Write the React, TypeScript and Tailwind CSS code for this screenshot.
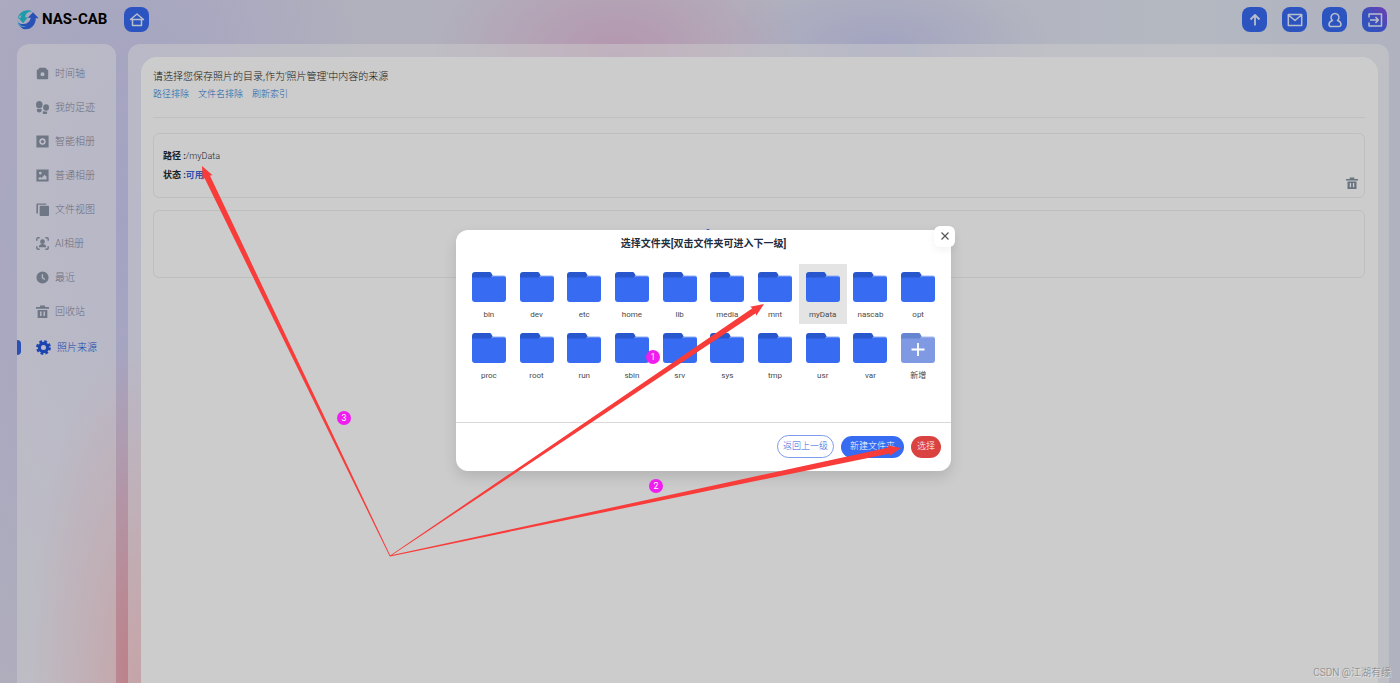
import type { ReactNode } from 'react';

interface MenuItem {
  label: string;
  icon: ReactNode;
  active?: boolean;
}

interface Arrow {
  from: [number, number];
  to: [number, number];
}

const menu: MenuItem[] = [
  {
    label: '时间轴',
    icon: (
      <path
        fillRule="evenodd"
        d="M3 2.500 4.500 1h7L13 2.500l2 1.500v9.500a1.500 1.500 0 0 1-1.500 1.500h-11A1.500 1.500 0 0 1 1 13.500V4zM8 6.500a2.500 2.500 0 1 0 0 5 2.500 2.500 0 0 0 0-5z"
      />
    ),
  },
  {
    label: '我的足迹',
    icon: (
      <>
        <ellipse cx="4" cy="4.500" rx="4" ry="4.500" />
        <path d="M1 9.800h6v1.500a3 3 0 0 1-6 0z" />
        <ellipse cx="12.400" cy="8" rx="3.600" ry="4" />
        <path d="m8.500 12.500 5.500.7-.4 1.400a2.600 2.600 0 0 1-5.200-.8z" />
      </>
    ),
  },
  {
    label: '智能相册',
    icon: (
      <path
        fillRule="evenodd"
        d="M.500.500h15v15H.500zM8 3.800 11 5l1.200 3L11 11l-3 1.200L5 11 3.800 8 5 5zM8 6a2 2 0 1 0 0 4 2 2 0 0 0 0-4z"
      />
    ),
  },
  {
    label: '普通相册',
    icon: (
      <path
        fillRule="evenodd"
        d="M.500.500h15v15H.500zM5.300 3.500a1.700 1.700 0 1 0 0 3.400 1.700 1.700 0 0 0 0-3.400zM3 13h10V9.500L10.500 7l-3.700 4L5 9.500l-2 2z"
      />
    ),
  },
  {
    label: '文件视图',
    icon: (
      <>
        <rect x="4.500" y="3.500" width="11.500" height="12.500" rx="1" />
        <path d="M.500 1.500a1 1 0 0 1 1-1h11V2H2.400v11H.500z" />
      </>
    ),
  },
  {
    label: 'AI相册',
    icon: (
      <>
        <path
          d="M1 4.500V2.500A1.500 1.500 0 0 1 2.500 1h2M11.500 1h2A1.500 1.500 0 0 1 15 2.500v2M15 11.500v2a1.500 1.500 0 0 1-1.500 1.500h-2M4.500 15h-2A1.500 1.500 0 0 1 1 13.500v-2"
          fill="none"
          stroke="currentColor"
          strokeWidth="1.800"
        />
        <circle cx="8" cy="5.800" r="2.900" />
        <path d="M3.500 12.500c0-3 2-4 4.500-4s4.500 1 4.500 4z" />
      </>
    ),
  },
  {
    label: '最近',
    icon: <path fillRule="evenodd" d="M8 .500a7.500 7.500 0 1 0 0 15 7.500 7.500 0 0 0 0-15zM7.100 4h1.600v4l2.700 1.700-.9 1.300-3.400-2.200z" />,
  },
  { label: '回收站', icon: <TrashShape /> },
  {
    label: '照片来源',
    active: true,
    icon: (
      <>
        <circle cx="8" cy="8" r="4.400" fill="none" stroke="currentColor" strokeWidth="3.400" />
        <circle cx="8" cy="8" r="6.600" fill="none" stroke="currentColor" strokeWidth="2.600" strokeDasharray="2.900 2.284" />
      </>
    ),
  },
];

const folders = [
  'bin', 'dev', 'etc', 'home', 'lib', 'media', 'mnt', 'myData', 'nascab', 'opt',
  'proc', 'root', 'run', 'sbin', 'srv', 'sys', 'tmp', 'usr', 'var',
];

const arrows: Arrow[] = [
  { from: [390, 556], to: [764, 304] },
  { from: [390, 556], to: [901, 448] },
  { from: [390, 556], to: [202, 166] },
];

// Thin at the tail, thick towards the head
function arrowPoints({ from, to }: Arrow) {
  const [x1, y1] = from;
  const [x2, y2] = to;
  const length = Math.hypot(x2 - x1, y2 - y1);
  const ux = (x2 - x1) / length;
  const uy = (y2 - y1) / length;
  const at = (back: number, side: number) => `${x2 - ux * back - uy * side},${y2 - uy * back + ux * side}`;
  return [at(length, -0.4), at(12, -3), at(13, -5.5), at(0, 0), at(13, 5.5), at(12, 3), at(length, 0.4)].join(' ');
}

function TrashShape() {
  return (
    <path
      fillRule="evenodd"
      d="M5 .500h6v2h5v2.200H0V2.500h5zM2 6h12v10H2zM5 8v5.500h1.800V8zm4.200 0v5.500H11V8z"
    />
  );
}

function Logo() {
  return (
    <svg viewBox="0 0 66 60" className="h-5 w-[22px]">
      <path d="M2 29C3 13 16 1 32 1c6 0 10 1 14 4-9-1-17 3-20 10l-2 7h9L18 40 4 23h7c0-3 1-6 3-9C7 18 3 23 2 29z" fill="#23c4d2" />
      <path d="M4 38c5 3 10 5 16 4 12-1 20-9 21-19h-9L48 7l17 18h-9c1 18-12 33-29 33C16 58 7 50 4 38z" fill="#3466e4" />
      <path d="M2 30c4 16 14 20 26 17-6 5-15 5-21 1-3-5-5-11-5-18z" fill="#55c2ea" />
    </svg>
  );
}

function HeaderButton({ label, purple, children }: { label: string; purple?: boolean; children: ReactNode }) {
  return (
    <button
      type="button"
      aria-label={label}
      className={`flex size-[25px] items-center justify-center rounded-lg text-[#e8eeff] ${
        purple ? 'bg-linear-to-bl from-[#8a4be0] via-[#4a62ea] to-[#376af0]' : 'bg-[#376af0]'
      }`}
    >
      <svg viewBox="0 0 16 16" fill="none" stroke="currentColor" strokeWidth="1.500" strokeLinejoin="round" className="size-4">
        {children}
      </svg>
    </button>
  );
}

function FolderIcon({ muted }: { muted?: boolean }) {
  return (
    <svg viewBox="0 0 34 30" className="h-[30px] w-[34px]">
      <path d="M0 3a3 3 0 0 1 3-3h14.500a2 2 0 0 1 1.800 1L21 4v8H0z" fill={muted ? '#6685d0' : '#2856cc'} />
      <path d="M20 3.500h12a2 2 0 0 1 2 2V10H18z" fill={muted ? '#a9bcf0' : '#8faef8'} />
      <path d="M0 5.500h19l2-1h11a2 2 0 0 1 2 2V27a3 3 0 0 1-3 3H3a3 3 0 0 1-3-3z" fill={muted ? '#7f9ae2' : '#366bf2'} />
      {muted && <path d="M17 10v13M10.500 16.500h13" stroke="#fff" strokeWidth="1.800" />}
    </svg>
  );
}

function Badge({ n, className }: { n: number; className: string }) {
  return (
    <span
      className={`absolute flex size-3.5 items-center justify-center rounded-full bg-[#f01df0] text-[9px] leading-none font-normal text-white ${className}`}
    >
      {n}
    </span>
  );
}

function Header() {
  return (
    <header className="flex h-11 items-start justify-between pt-[7px] pr-[13px] pl-[17px]">
      <div className="flex items-center">
        <Logo />
        <span className="ml-[3px] text-[15px] leading-[25px] font-bold text-black">NAS-CAB</span>
        <div className="ml-[17px]">
          <HeaderButton label="主页">
            <path d="M1.500 7.500 8 2l6.500 5.500zM3.500 8v5.500h9V8" />
          </HeaderButton>
        </div>
      </div>
      <div className="flex gap-[15px]">
        <HeaderButton label="上传">
          <path d="M8 13.500V3.500M3.500 7.500 8 3l4.500 4.500" strokeWidth="1.800" />
        </HeaderButton>
        <HeaderButton label="消息">
          <path d="M1.300 2.500h13.400v11H1.300zM1.500 3 8 8.500 14.500 3" />
        </HeaderButton>
        <HeaderButton label="用户">
          <path d="M5.500 8.500a4 4 0 1 1 5 0c2.200.7 3.500 2 3.500 4 0 1.500-1 2-2.200 2H4.200c-1.200 0-2.200-.500-2.200-2 0-2 1.300-3.300 3.500-4z" />
        </HeaderButton>
        <HeaderButton label="退出" purple>
          <path d="M2 5.500V2h12.500v12H2v-3.500M3 8h8M8.500 5 11.300 8 8.500 11" />
        </HeaderButton>
      </div>
    </header>
  );
}

function Sidebar() {
  return (
    <nav className="w-[99px] shrink-0 rounded-t-xl bg-white/50 pt-3">
      {menu.map((item) => (
        <a
          key={item.label}
          href="#"
          className={`relative flex items-center gap-1.5 pl-[19px] text-[10px] ${
            item.active ? 'h-[38px] text-[#2455dc]' : 'h-[34px] text-[#85899e]'
          }`}
        >
          {item.active && <span className="absolute left-0 h-[15px] w-1 rounded-r-sm bg-[#3565e4]" />}
          <svg
            viewBox="0 0 16 16"
            fill="currentColor"
            className={item.active ? 'size-[15px]' : 'size-[13px] text-[#8b95a9]'}
          >
            {item.icon}
          </svg>
          {item.label}
        </a>
      ))}
    </nav>
  );
}

function Sources() {
  return (
    <main className="grow rounded-t-xl bg-white/50 pt-[13px] pr-[11px] pl-[13px]">
      <div className="h-full rounded-t-2xl bg-white pt-3 pr-[13px] pl-3">
        <h1 className="text-[10px] leading-4 text-[#1c1e22]">请选择您保存照片的目录,作为'照片管理'中内容的来源</h1>
        <div className="flex gap-[9px] text-[9px] leading-[18px] text-[#2279d8]">
          <a href="#">路径排除</a>
          <a href="#">文件名排除</a>
          <a href="#">刷新索引</a>
        </div>
        <hr className="mt-3.5 border-[#f0f0f0]" />

        <section className="mt-[15px] flex items-end justify-between rounded-md border border-[#efeff1] pt-[13px] pr-1.5 pb-3 pl-[9px] text-[9px] leading-[19px] text-[#2c2f34]">
          <div>
            <p>
              <b className="font-bold text-[#24292f]">路径 :</b>/myData
            </p>
            <p>
              <b className="font-bold text-[#24292f]">状态 :</b>
              <b className="font-bold text-[#3b62d8]">可用</b>
            </p>
          </div>
          <button type="button" aria-label="删除" className="-mb-1 text-[#8390a0]">
            <svg viewBox="0 0 16 16" fill="currentColor" className="size-3">
              <TrashShape />
            </svg>
          </button>
        </section>

        <button
          type="button"
          aria-label="添加"
          className="mt-3 flex h-[68px] w-full items-center justify-center rounded-md border border-[#efeff1] pr-[102px]"
        >
          <svg viewBox="0 0 30 30" stroke="#376af0" strokeWidth="4" strokeLinecap="round" className="size-[30px]">
            <path d="M15 2v26M2 15h26" />
          </svg>
        </button>
      </div>
    </main>
  );
}

function FolderDialog() {
  return (
    <div
      role="dialog"
      aria-labelledby="dialog-title"
      className="relative w-[495px] rounded-xl bg-white shadow-[0_6px_14px_rgba(0,0,0,0.12)]"
    >
      <button
        type="button"
        aria-label="关闭"
        className="absolute -top-1 -right-1 flex size-[21px] items-center justify-center rounded-md bg-white shadow-[0_3px_8px_rgba(0,0,0,0.06)]"
      >
        <svg viewBox="0 0 8 8" stroke="#555" strokeWidth="1.200" className="size-2">
          <path d="m.500.500 7 7M7.500.500l-7 7" />
        </svg>
      </button>
      <h2 id="dialog-title" className="pt-1.5 text-center text-[10px] leading-4 font-bold text-[#1f2d3d]">
        选择文件夹[双击文件夹可进入下一级]
      </h2>

      <div className="mt-3 grid min-h-[158px] grid-cols-10 content-start gap-y-px px-[9px] text-[8px] font-normal text-[#4a4a4a]">
        {folders.map((name) => (
          <button
            key={name}
            type="button"
            className={`flex h-[60px] flex-col items-center pt-2 ${name === 'myData' ? 'bg-[#e4e4e4]' : ''}`}
          >
            <FolderIcon />
            <span className="mt-2 leading-[10px]">{name}</span>
          </button>
        ))}
        <button type="button" className="flex h-[60px] flex-col items-center pt-2">
          <FolderIcon muted />
          <span className="mt-2 leading-[10px]">新增</span>
        </button>
      </div>

      <footer className="flex h-[49px] items-center justify-end gap-[7px] border-t border-[#d9d9d9] px-2.5 text-[9px]">
        <button type="button" className="h-[23px] rounded-full border border-[#7d9cf0] px-[5px] text-[#2f5cdc]">
          返回上一级
        </button>
        <button type="button" className="h-[22px] rounded-full bg-[#366bf2] px-[9px] text-white">
          新建文件夹
        </button>
        <button type="button" className="h-[22px] rounded-full bg-[#da4242] px-1.5 text-white">
          选择
        </button>
      </footer>
    </div>
  );
}

export default function App() {
  return (
    <div className="relative flex min-h-screen flex-col overflow-hidden bg-[radial-gradient(ellipse_13%_18%_at_44%_8%,#e2bcdb,#e2bcdb00),radial-gradient(ellipse_12%_12%_at_63%_7%,#cbcdf2,#cbcdf200),radial-gradient(ellipse_8%_50%_at_10%_100%,#ee9ca6,#ee9ca600),radial-gradient(ellipse_18%_80%_at_9%_32%,#cccbf4,#cccbf400),linear-gradient(to_right,#dcdaec,#dfdeec_50%,#e0e6f2_85%,#dcdfef)] font-[Roboto,'Noto_Sans_CJK_SC',sans-serif] font-light">
      <Header />
      <div className="flex grow gap-3 pr-[11px] pl-[17px]">
        <Sidebar />
        <Sources />
      </div>

      {/* dialog with its backdrop */}
      <div className="absolute inset-0 flex items-center justify-center bg-black/20 pt-[17px] pl-[7px]">
        <FolderDialog />
      </div>

      {/* step markers */}
      <div className="pointer-events-none absolute inset-0">
        <svg viewBox="0 0 1400 683" className="w-full" fill="#f83c3a">
          {arrows.map((arrow) => (
            <polygon key={arrow.to.join()} points={arrowPoints(arrow)} />
          ))}
        </svg>
        <Badge n={1} className="top-[350px] left-[646px]" />
        <Badge n={2} className="top-[479px] left-[649px]" />
        <Badge n={3} className="top-[411px] left-[337px]" />
        <span className="absolute right-[9px] bottom-[3px] text-[10px] leading-[14px] text-[#808080] [text-shadow:1px_1px_0_#e8e8e8]">
          CSDN @江湖有缘
        </span>
      </div>
    </div>
  );
}
